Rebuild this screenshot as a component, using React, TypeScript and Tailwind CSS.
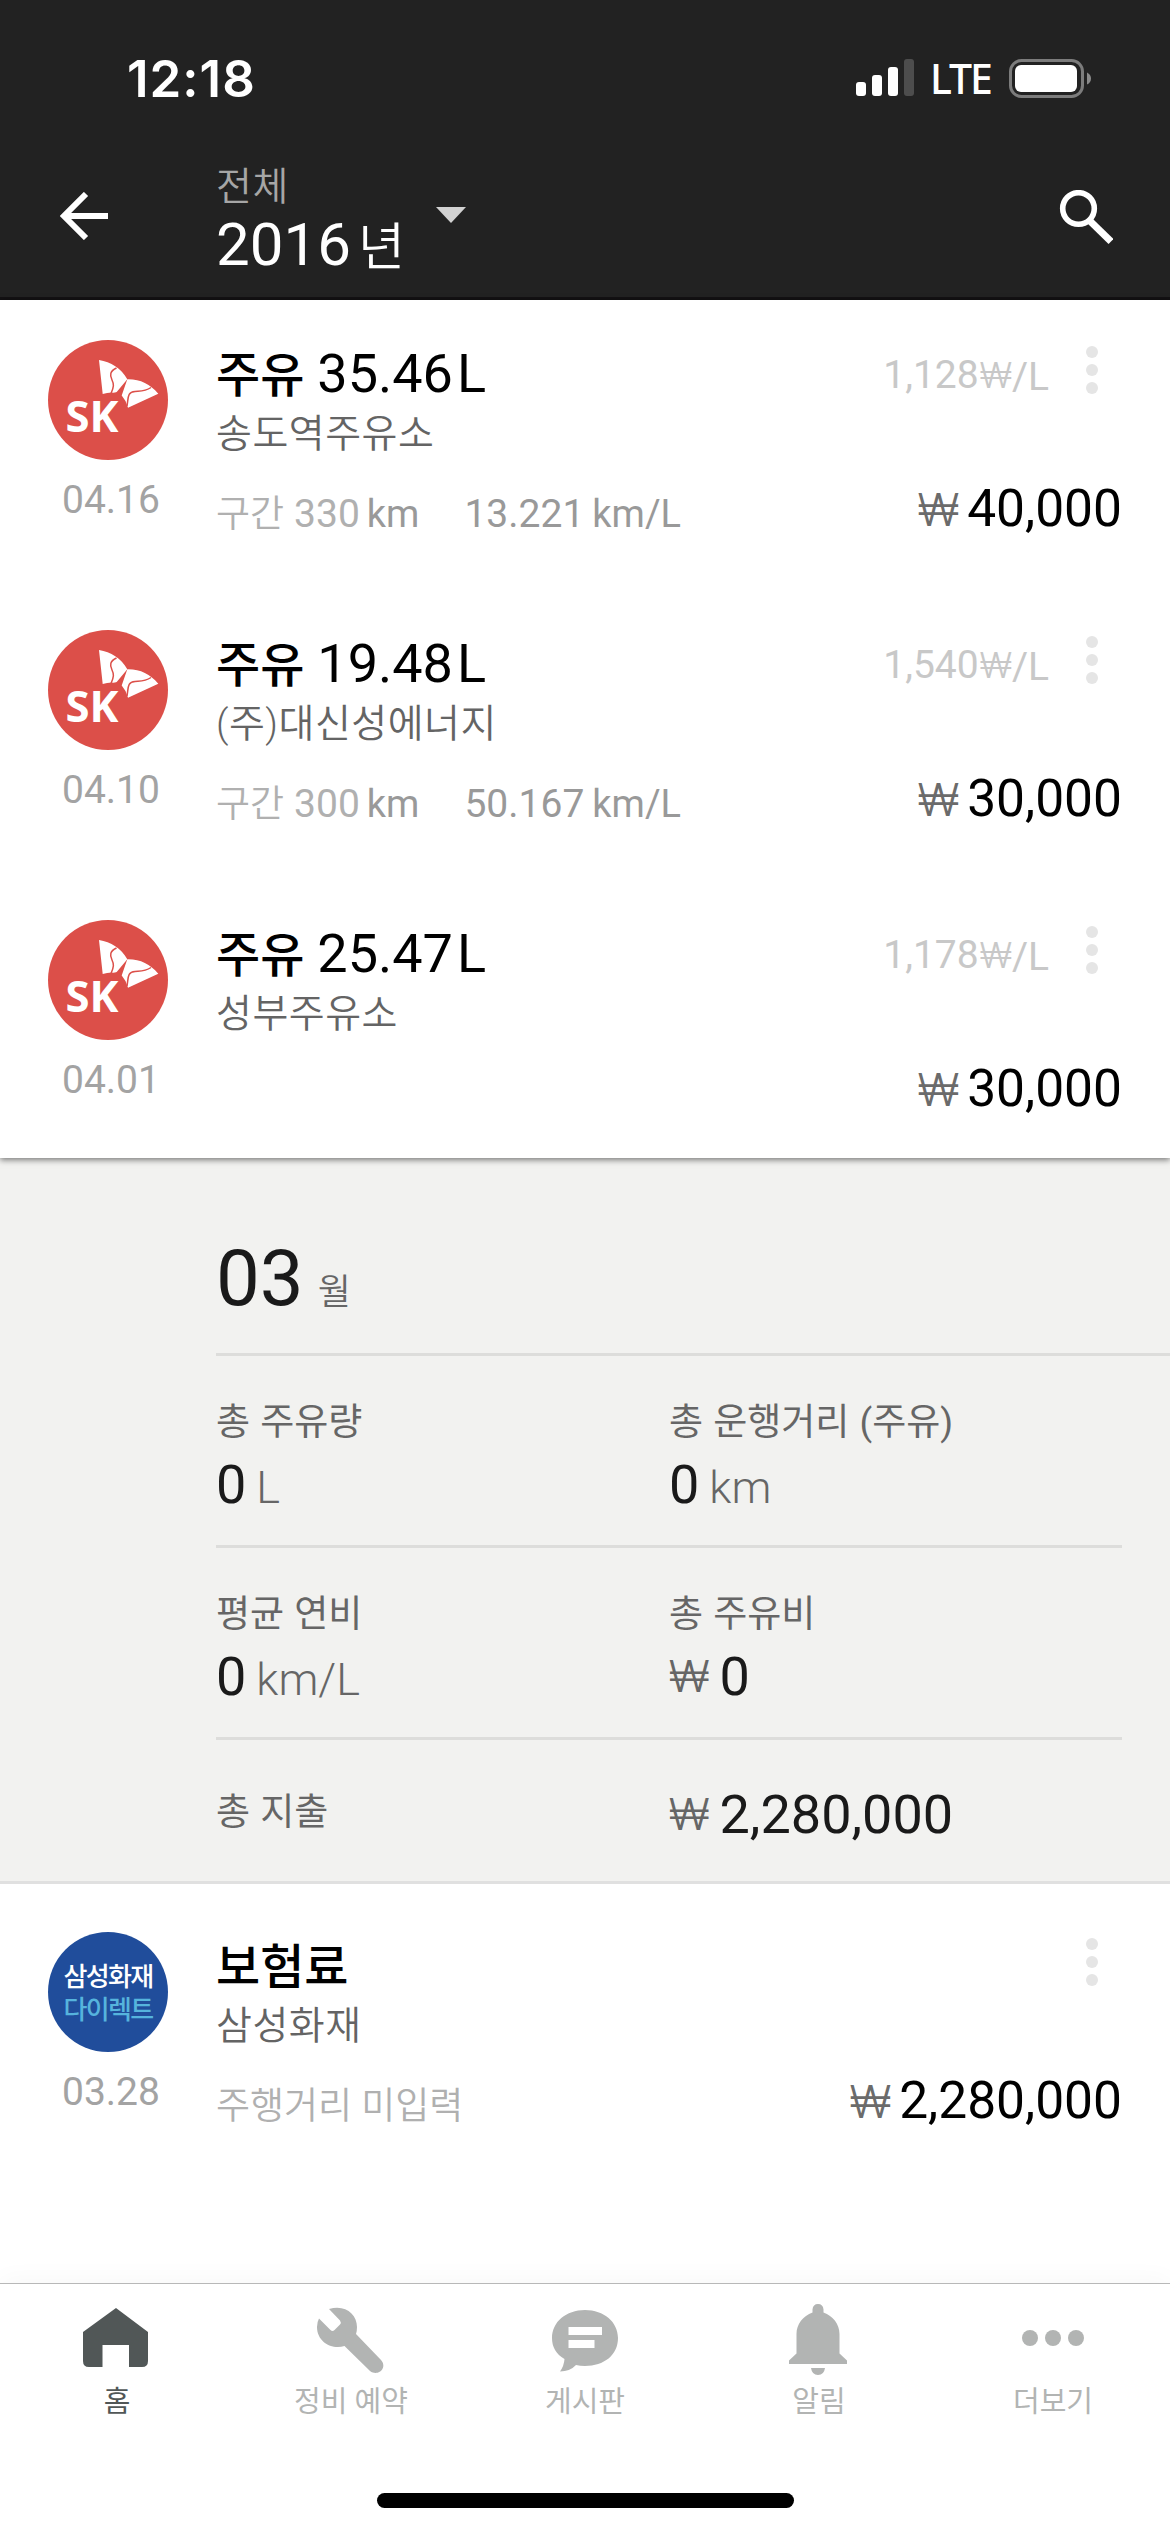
import React from 'react';

interface FuelLog {
  id: number;
  date: string;
  amount: string;
  station: string;
  distance?: string;
  mileage?: string;
  unitPrice: string;
  total: string;
}

const fuelLogs: FuelLog[] = [
  { id: 1, date: '04.16', amount: '35.46', station: '송도역주유소', distance: '330', mileage: '13.221', unitPrice: '1,128', total: '40,000' },
  { id: 2, date: '04.10', amount: '19.48', station: '(주)대신성에너지', distance: '300', mileage: '50.167', unitPrice: '1,540', total: '30,000' },
  { id: 3, date: '04.01', amount: '25.47', station: '성부주유소', unitPrice: '1,178', total: '30,000' },
];

const SkLogo = () => (
  <svg viewBox="0 0 120 120" className="block size-[120px]">
    <circle cx="60" cy="60" r="60" fill="#dc4f49" />
    <path d="M51 20C63 22 73 28 79.3 39.3L68.7 52Q66 53 63.7 52.5Q59 52.5 54.7 54Z" fill="#fff" />
    <path d="M79.3 39.3C92 39 102 44 110.3 53.7L80 67.7L77.5 61L73.7 55.5Z" fill="#fff" />
    <path d="M68.5 28C62 31 61.5 35 64 40C66 44 66 47 63 53.5" fill="none" stroke="#dc4f49" strokeWidth="1.5" />
    <path d="M103 47.5C97 51.5 93 51 87 51.5C79 52 80.5 58 79 66" fill="none" stroke="#dc4f49" strokeWidth="1.5" />
    <text x="17.5" y="92" textLength="53" lengthAdjust="spacingAndGlyphs" fontFamily="Open Sans, sans-serif" fontWeight="700" fontSize="43" fill="#fff">SK</text>
  </svg>
);

const SamsungLogo = () => (
  <div className="flex size-[120px] flex-col items-center justify-center rounded-full bg-[#204d9b] pt-1 text-[26px] font-medium leading-[33px] tracking-[-1.7px]">
    <span className="text-white">삼성화재</span>
    <span className="text-[#56b4dd]">다이렉트</span>
  </div>
);

const MoreDots = () => (
  <div className="flex flex-col gap-1.5">
    <i className="size-3 rounded-full bg-[#e5e5e5]" />
    <i className="size-3 rounded-full bg-[#e5e5e5]" />
    <i className="size-3 rounded-full bg-[#e5e5e5]" />
  </div>
);

interface RowProps {
  logo: React.ReactNode;
  date: string;
  title: React.ReactNode;
  subtitle: string;
  detail?: React.ReactNode;
  unitPrice?: string;
  total: string;
}

const LogRow = ({ logo, date, title, subtitle, detail, unitPrice, total }: RowProps) => (
  <div className="flex h-[290px] pr-12">
    <div className="w-[168px] shrink-0 pl-12 pt-10">
      {logo}
      <p className="mt-[21px] pl-3.5 text-[39px] leading-[39px] text-[#a3a3a3]">{date}</p>
    </div>
    <div className="flex-1 whitespace-nowrap pl-12 pt-[47px]">
      <h4 className="text-[54px] leading-[54px] text-black">{title}</h4>
      <p className="mt-3 text-[39px] font-[350] leading-[39px] tracking-[0.5px] text-[#646464]">{subtitle}</p>
      <div className="mt-[41px] flex text-[39px] leading-[39px] text-[#999999]">{detail}</div>
    </div>
    <div className="flex flex-col items-end pt-[46px]">
      <div className="flex h-12 gap-[37px] pr-6">
        {unitPrice && (
          <p className="mt-2.5 text-[39px] leading-[39px] text-[#c8c8c8]">
            {unitPrice}
            <span className="ml-px font-[Inter] text-[35px] font-light leading-none">₩</span>
            <span className="align-[-2px] leading-none">/L</span>
          </p>
        )}
        <MoreDots />
      </div>
      <p className="mt-[89px] text-[51.5px] leading-[52px] text-black">
        <span className="mr-2 font-[Inter] text-[45px] font-[350] leading-none text-[#6b6b6b]">₩</span>
        {total}
      </p>
    </div>
  </div>
);

const Won = () => <span className="mr-2.5 align-[3px] font-[Inter] text-[44px] font-light leading-none text-[#666666]">₩</span>;

interface StatProps {
  label: string;
  value: string;
  unit?: string;
  won?: boolean;
}

const Stat = ({ label, value, unit, won }: StatProps) => (
  <div className="w-[453px] whitespace-nowrap pt-12">
    <p className="text-[37px] leading-[37px] text-[#666666] [word-spacing:1px]">{label}</p>
    <p className="mt-[17px] text-[54px] leading-[54px] text-[#1a1a1a]">
      {won && <Won />}
      {value}
      {unit && <span className="ml-2.5 text-[45px] font-light text-[#666666]">{unit}</span>}
    </p>
  </div>
);

const StatusBar = () => (
  <div className="flex h-[154px] items-center justify-between pl-[127px] pr-[79px] pt-0.5 text-white">
    <span className="font-[Inter] text-[51px] font-semibold leading-none tracking-[1px]">12:18</span>
    <div className="flex items-center">
      <svg viewBox="0 0 58 38" className="h-[38px] w-[58px]" fill="#fff">
        <rect x="0" y="23" width="10" height="14" rx="3" />
        <rect x="16" y="16" width="10" height="21" rx="3" />
        <rect x="32" y="8" width="10" height="29" rx="3" />
        <rect x="48" y="0" width="10" height="37" rx="3" fill="#4d4d4d" />
      </svg>
      <span className="ml-4 w-[61px] font-['Noto_Sans'] text-[41px] font-medium leading-none tracking-[-2px]">LTE</span>
      <svg viewBox="0 0 82 39" className="ml-[18px] h-[39px] w-[82px]">
        <rect x="1.5" y="1.5" width="72" height="36" rx="11" fill="none" stroke="#7c7c7c" strokeWidth="3" />
        <rect x="6" y="6" width="62" height="27" rx="6" fill="#fff" />
        <path d="M78 13.5Q82 15.5 82 19.5T78 25.5Z" fill="#8a8a8a" />
      </svg>
    </div>
  </div>
);

const Header = () => (
  <header className="h-[300px] border-b-[3px] border-[#131113] bg-[#222222]">
    <StatusBar />
    <div className="flex">
      <svg viewBox="0 0 48 48" className="ml-[60px] mt-[38px] size-12" fill="none" stroke="#fff" strokeWidth="6">
        <path d="M26 2L4 24L26 46M4 24H48" />
      </svg>
      <div className="ml-[108px] mt-[14px] whitespace-nowrap text-white">
        <p className="text-[39px] font-[350] leading-[39px] tracking-[0.5px] text-[#a6a6a6]">전체</p>
        <p className="mt-2 text-[60px] leading-[60px]">
          2016<span className="ml-[7px] text-[51px] font-[350]">년</span>
        </p>
      </div>
      <svg viewBox="0 0 30 16" className="ml-[31px] mt-[53px] h-4 w-[30px]">
        <path d="M0 0H30L15 16Z" fill="#d2d2d2" />
      </svg>
      <svg viewBox="0 0 54 54" className="ml-auto mr-[57px] mt-9 size-[54px]" fill="none" stroke="#fff">
        <circle cx="19.5" cy="18.5" r="15.8" strokeWidth="5.6" />
        <path d="M31 31L52 51.5" strokeWidth="7" />
      </svg>
    </div>
  </header>
);

const tabs = [
  {
    label: '홈',
    active: true,
    icon: <path fillRule="evenodd" d="M3 27L36 3L68 27V56Q68 62 62 62H49V40H22.5V62H9Q3 62 3 56Z" />,
  },
  {
    label: '정비 예약',
    icon: (
      <path d="M15 4C31 -1 43 9 43 22Q43 26 42 29L67 55C74 63 64 72 56 66L30.500 41C18 45 3 37 3 22Q3 17 5 13.500L16.500 25Q18.500 27 20.500 25L26 19.500Q27.500 17.500 26 15.500Z" />
    ),
  },
  {
    label: '게시판',
    icon: (
      <path fillRule="evenodd" d="M37 5C56 5 70 17 70 33C70 50 56 61 37 61Q32 61 28 60Q22 66.500 12 66.500Q16 61 16.500 54C8 49 4 42 4 33C4 17 18 5 37 5ZM20.500 22V30H54V22ZM20.500 35V43H46.500V35Z" />
    ),
  },
  {
    label: '알림',
    icon: (
      <path d="M30.500 7.500V4.500Q31 -1 36 -1T41.500 4.500V7.500C51 11 57.500 19 57.500 29V48.500L65 55.500V59H7V55.500L14.500 48.500V29C14.500 19 21 11 30.500 7.500ZM29 63H43Q42 70 36 70T29 63Z" />
    ),
  },
  {
    label: '더보기',
    icon: (
      <>
        <circle cx="14" cy="33" r="8" />
        <circle cx="37" cy="33" r="8" />
        <circle cx="60" cy="33" r="8" />
      </>
    ),
  },
];

const TabBar = () => (
  <nav className="relative flex h-[249px] flex-col items-center border-t border-[#b8b8b8] bg-white shadow-[0_-4px_24px_rgba(0,0,0,0.03)]">
    <div className="flex w-full">
      {tabs.map((tab) => (
        <div key={tab.label} className={`flex w-[234px] flex-col items-center pt-[21px] ${tab.active ? 'text-[#515757]' : 'text-[#b2b4b3]'}`}>
          <svg viewBox="0 0 72 72" className="mr-0.5 size-[72px] overflow-visible" fill="currentColor">
            {tab.icon}
          </svg>
          <span className="mt-[11px] text-[29px] leading-[29px]">{tab.label}</span>
        </div>
      ))}
    </div>
    <div className="mb-6 mt-auto h-[15px] w-[417px] rounded-full bg-black" />
  </nav>
);

const App = () => {
  return (
    <div className="flex h-[2532px] w-[1170px] flex-col overflow-hidden bg-white font-[Roboto,'Noto_Sans_CJK_KR',sans-serif]">
      <Header />

      <section className="relative h-[858px] bg-white shadow-[0_2px_6px_rgba(0,0,0,0.5)]">
        {fuelLogs.map((log) => (
          <LogRow
            key={log.id}
            logo={<SkLogo />}
            date={log.date}
            title={
              <>
                <span className="mr-[13px] text-[48px] font-medium">주유</span>
                {log.amount}
                <span className="ml-1">L</span>
              </>
            }
            subtitle={log.station}
            detail={
              log.distance && (
                <>
                  <span className="text-[#b0b0b0]">
                    <span className="mr-2.5 text-[37px] font-[350]">구간</span>
                    {log.distance}
                  </span>
                  <span className="ml-[7px] text-[38px]">km</span>
                  <span className="ml-[45px]">{log.mileage}</span>
                  <span className="ml-2 text-[38px]">km/L</span>
                </>
              )
            }
            unitPrice={log.unitPrice}
            total={log.total}
          />
        ))}
      </section>

      {/* monthly summary */}
      <section className="h-[726px] border-b-[3px] border-[#e0e0e0] bg-[#f2f2f0] pl-[216px]">
        <div className="flex h-[198px] items-baseline border-b-[3px] border-[#dddddb] pt-[82px]">
          <span className="text-[78px] leading-[78px] text-[#1a1a1a]">03</span>
          <span className="ml-3.5 text-[36px] font-[350] text-[#666666]">월</span>
        </div>
        <div className="mr-12 flex h-48 border-b-[3px] border-[#dddddb]">
          <Stat label="총 주유량" value="0" unit="L" />
          <Stat label="총 운행거리 (주유)" value="0" unit="km" />
        </div>
        <div className="mr-12 flex h-48 border-b-[3px] border-[#dddddb]">
          <Stat label="평균 연비" value="0" unit="km/L" />
          <Stat label="총 주유비" value="0" won />
        </div>
        <div className="flex h-[144px] items-center whitespace-nowrap">
          <p className="w-[453px] text-[37px] leading-[37px] text-[#666666] [word-spacing:1px]">총 지출</p>
          <p className="mt-1.5 text-[54px] leading-[54px] text-[#1a1a1a]">
            <Won />
            2,280,000
          </p>
        </div>
      </section>

      <section className="flex-1 pt-2">
        <LogRow
          logo={<SamsungLogo />}
          date="03.28"
          title={<span className="text-[48px] font-medium">보험료</span>}
          subtitle="삼성화재"
          detail={<span className="text-[37px] font-[350] text-[#b0b0b0]">주행거리 미입력</span>}
          total="2,280,000"
        />
      </section>

      <TabBar />
    </div>
  );
};

export default App;
